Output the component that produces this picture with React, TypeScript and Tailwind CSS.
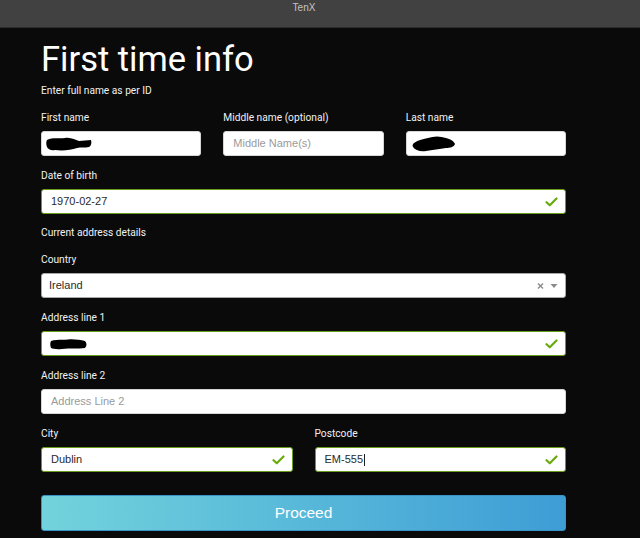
import React from "react";

const Check = () => (
  <svg width="13" height="10" viewBox="0 0 13 10" className="absolute right-[7px] top-1/2 -translate-y-1/2">
    <path d="M1.5 5.2 L4.8 8.3 L11.5 1.5" fill="none" stroke="#6aaa0e" strokeWidth="2.2" strokeLinecap="round" strokeLinejoin="round" />
  </svg>
);

const Blob = ({ w, h, d }: { w: number; h: number; d: string }) => (
  <svg width={w} height={h} viewBox={`0 0 ${w} ${h}`} className="absolute left-[3px] top-1/2 -translate-y-1/2">
    <path d={d} fill="#000" />
  </svg>
);

type InputProps = {
  value?: string;
  placeholder?: string;
  valid?: boolean;
  children?: React.ReactNode;
  caret?: boolean;
};

const Input = ({ value, placeholder, valid, children, caret }: InputProps) => (
  <div
    className={`relative h-[25px] rounded-[3px] bg-white border ${valid ? "border-[#6b9d1c]" : "border-[#d6d6d6]"} flex items-center pl-[9px] text-[11px] font-['Liberation_Sans',Arial,sans-serif]`}
  >
    {value ? (
      <span className="text-[#2a2a2a]">
        {value}
        {caret && <span className="inline-block w-px h-[12px] bg-[#222] align-middle ml-px" />}
      </span>
    ) : placeholder ? (
      <span className="text-[#9a9a9a]">{placeholder}</span>
    ) : null}
    {children}
    {valid && <Check />}
  </div>
);

const Label = ({ children }: { children: React.ReactNode }) => (
  <div className="h-[14px] leading-[14px] text-[10.2px] text-[#f2f2f2] mb-[6px]">{children}</div>
);

export default function App() {
  return (
    <div className="w-[640px] h-[538px] bg-[#0a0a0a] overflow-hidden font-['Roboto',sans-serif]">
      <div className="h-[28px] bg-[#414141] border-b border-[#2c2c2c] flex justify-center pr-[32px] pt-[1px]">
        <span className="text-[10px] leading-[14px] text-[#c4c4c4] font-['Liberation_Sans',Arial,sans-serif]">TenX</span>
      </div>
      <div className="ml-[41px] w-[525px]">
        <h1 className="mt-[11px] text-[34.5px] leading-[40px] text-white">First time info</h1>
        <div className="mt-[5px] h-[14px] leading-[14px] text-[10.2px] text-[#f2f2f2]">Enter full name as per ID</div>

        <div className="mt-[13px] grid grid-cols-3 gap-x-[22px]">
          <div>
            <Label>First name</Label>
            <Input>
              <Blob w={48} h={16} d="M2 4 C8 1 14 3 20 2 C26 1 30 4 34 5 L46 4 C47 7 46 10 44 11 C40 12 36 11 32 12 C26 14 18 15 10 14 C6 15 3 13 2 11 C1 8 1 6 2 4 Z" />
            </Input>
          </div>
          <div>
            <Label>Middle name (optional)</Label>
            <Input placeholder="Middle Name(s)" />
          </div>
          <div>
            <Label>Last name</Label>
            <Input>
              <Blob w={46} h={18} d="M4 8 C8 5 14 4 18 3 C24 1 30 1 36 3 C40 4 44 6 45 9 C44 12 40 13 36 13 C30 14 22 15 16 16 C10 17 5 15 3 12 C2 10 3 9 4 8 Z" />
            </Input>
          </div>
        </div>

        <div className="mt-[13px]">
          <Label>Date of birth</Label>
          <Input value="1970-02-27" valid />
        </div>

        <div className="mt-[12px] h-[14px] leading-[14px] text-[10.2px] text-[#f2f2f2]">Current address details</div>

        <div className="mt-[13px]">
          <Label>Country</Label>
          <div className="relative h-[25px] rounded-[3px] bg-white border border-[#a8a8a8] flex items-center pl-[7px] text-[11px] font-['Liberation_Sans',Arial,sans-serif]">
            <span className="text-[#2a2a2a]">Ireland</span>
            <div className="absolute right-[7px] top-1/2 -translate-y-1/2 flex items-center gap-[6px]">
              <svg width="7" height="7" viewBox="0 0 7 7">
                <path d="M1 1 L6 6 M6 1 L1 6" stroke="#8a8a8a" strokeWidth="1.4" />
              </svg>
              <svg width="8" height="5" viewBox="0 0 8 5">
                <path d="M0.5 0.5 L7.5 0.5 L4 4.5 Z" fill="#8a8a8a" />
              </svg>
            </div>
          </div>
        </div>

        <div className="mt-[13px]">
          <Label>Address line 1</Label>
          <Input valid>
            <div className="absolute left-[8px] top-1/2 -translate-y-1/2">
              <svg width="38" height="12" viewBox="0 0 38 12">
                <path d="M1 3 C6 1 12 2 18 1.5 C24 1 30 2 35 3 C37 5 37 8 35 10 C28 11 20 10 12 11 C7 11.5 3 11 1 10 C0 7 0 5 1 3 Z" fill="#000" />
              </svg>
            </div>
          </Input>
        </div>

        <div className="mt-[13px]">
          <Label>Address line 2</Label>
          <Input placeholder="Address Line 2" />
        </div>

        <div className="mt-[13px] grid grid-cols-2 gap-x-[22px]">
          <div>
            <Label>City</Label>
            <Input value="Dublin" valid />
          </div>
          <div>
            <Label>Postcode</Label>
            <Input value="EM-555" valid caret />
          </div>
        </div>

        <button className="mt-[23px] w-full h-[36px] rounded-[3px] border border-[#3a93c6] bg-gradient-to-r from-[#72d3dc] to-[#3e9dd5] text-white text-[15.5px] font-['Liberation_Sans',Arial,sans-serif] flex items-center justify-center">
          Proceed
        </button>
      </div>
    </div>
  );
}
